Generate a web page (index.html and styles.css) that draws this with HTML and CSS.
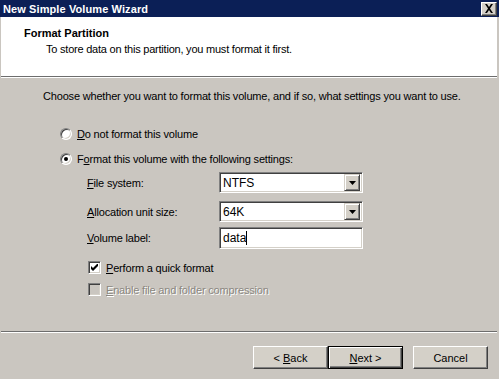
FILE: index.html
```html
<!DOCTYPE html>
<html>
<head>
<meta charset="utf-8">
<link rel="stylesheet" href="styles.css">
</head>
<body>
<div class="window">
  <div class="titlebar">
    <span class="title">New Simple Volume Wizard</span>
    <span class="close"><svg width="10" height="9" viewBox="0 0 10 9"><path d="M1 0h2l2 3 2-3h2L6 4.5 9 9H7L5 6 3 9H1l3-4.5z" fill="#000"/></svg></span>
  </div>
  <div class="header">
    <div class="h-title">Format Partition</div>
    <div class="h-sub">To store data on this partition, you must format it first.</div>
  </div>
  <div class="content">
    <p class="intro">Choose whether you want to format this volume, and if so, what settings you want to use.</p>
    <div class="radios">
      <div class="radio-row"><span class="radio"></span><span><u>D</u>o not format this volume</span></div>
      <div class="radio-row"><span class="radio on"></span><span>F<u>o</u>rmat this volume with the following settings:</span></div>
    </div>
    <div class="fields">
      <div class="field f1"><span class="lbl"><u>F</u>ile system:</span><div class="combo"><span class="val">NTFS</span><span class="drop"><svg width="7" height="4" viewBox="0 0 7 4"><path d="M0 0h7L3.5 4z" fill="#000"/></svg></span></div></div>
      <div class="field f2"><span class="lbl"><u>A</u>llocation unit size:</span><div class="combo"><span class="val">64K</span><span class="drop"><svg width="7" height="4" viewBox="0 0 7 4"><path d="M0 0h7L3.5 4z" fill="#000"/></svg></span></div></div>
      <div class="field f3"><span class="lbl"><u>V</u>olume label:</span><div class="textbox"><span class="val">data</span><span class="caret"></span></div></div>
    </div>
    <div class="checks">
      <div class="check-row"><span class="check"><svg width="7" height="7" viewBox="0 0 7 7"><path d="M0 2v3l2 2 5-5V-1L2 4z" fill="#000"/></svg></span><span><u>P</u>erform a quick format</span></div>
      <div class="check-row disabled"><span class="check dis"></span><span><u>E</u>nable file and folder compression</span></div>
    </div>
  </div>
  <div class="sep"></div>
  <div class="buttons">
    <button class="btn">&lt; <u>B</u>ack</button>
    <button class="btn default"><u>N</u>ext &gt;</button>
    <button class="btn cancel">Cancel</button>
  </div>
</div>
</body>
</html>
```

FILE: styles.css
```css
* { box-sizing: border-box; }
html, body { margin: 0; padding: 0; }
body {
  width: 499px;
  height: 379px;
  overflow: hidden;
  background: #cac6c0;
  font-family: "Liberation Sans", Arial, sans-serif;
  font-size: 11px;
  letter-spacing: -0.18px;
  color: #000;
}
u { text-decoration: underline; text-underline-offset: 1px; }
.window {
  width: 499px;
  height: 379px;
  display: flex;
  flex-direction: column;
  background: #cac6c0;
}
.titlebar {
  height: 17px;
  background: #0b1f56;
  display: flex;
  align-items: center;
  justify-content: space-between;
  padding: 0 2px 0 3px;
}
.title {
  color: #fff;
  font-weight: bold;
  font-size: 11px;
  letter-spacing: 0.1px;
}
.close {
  width: 16px;
  height: 14px;
  background: #d4d0c8;
  border-top: 1px solid #fff;
  border-left: 1px solid #fff;
  border-right: 1px solid #404040;
  border-bottom: 1px solid #404040;
  box-shadow: inset -1px -1px #808080;
  display: flex;
  align-items: center;
  justify-content: center;
  padding-bottom: 1px;
}
.header {
  height: 60px;
  background: #fff;
  margin: 0 2px 0 1px;
  padding: 10px 0 0 23px;
  border-bottom: 1px solid #6d6d6d;
}
.h-title {
  font-weight: bold;
  font-size: 11px;
  line-height: 13px;
  letter-spacing: 0;
}
.h-sub {
  margin-top: 3px;
  padding-left: 22px;
  line-height: 13px;
  letter-spacing: -0.22px;
}
.content {
  border-top: 1px solid #fff;
  margin: 0 2px 0 1px;
  padding: 12px 0 0 42px;
  height: 254px;
}
.intro {
  margin: 0;
  line-height: 13px;
}
.radios {
  margin-top: 24px;
  padding-left: 17px;
  display: flex;
  flex-direction: column;
  gap: 12px;
}
.radio-row {
  display: flex;
  align-items: center;
  gap: 5px;
  height: 13px;
}
.radio {
  width: 12px;
  height: 12px;
  border-radius: 50%;
  background: #fff;
  border: 1px solid;
  border-color: #808080 #fff #fff #808080;
  box-shadow: inset 1px 1px #404040, inset -1px -1px #d4d0c8;
  position: relative;
}
.radio.on::after {
  content: "";
  position: absolute;
  width: 4px;
  height: 4px;
  border-radius: 50%;
  background: #000;
  left: 3px;
  top: 3px;
}
.fields {
  margin-top: 7px;
  padding-left: 44px;
  display: flex;
  flex-direction: column;
}
.field {
  display: flex;
  align-items: center;
}
.f2 { margin-top: 8px; }
.f3 { margin-top: 5px; }
.lbl {
  width: 132px;
}
.combo, .textbox {
  width: 144px;
  height: 21px;
  background: #fff;
  border: 1px solid;
  border-color: #808080 #fff #fff #808080;
  box-shadow: inset 1px 1px #404040, inset -1px -1px #d4d0c8;
  display: flex;
  align-items: center;
  padding: 2px;
}
.textbox { height: 22px; }
.val {
  flex: 1;
  padding-left: 1px;
  font-size: 12px;
  letter-spacing: 0;
}
.textbox .val { flex: none; }
.caret {
  width: 1px;
  height: 14px;
  background: #000;
}
.drop {
  width: 16px;
  height: 17px;
  background: #d4d0c8;
  border-top: 1px solid #d4d0c8;
  border-left: 1px solid #d4d0c8;
  border-right: 1px solid #404040;
  border-bottom: 1px solid #404040;
  box-shadow: inset 1px 1px #fff, inset -1px -1px #808080;
  display: flex;
  align-items: center;
  justify-content: center;
}
.checks {
  margin-top: 12px;
  padding-left: 45px;
  display: flex;
  flex-direction: column;
  gap: 9px;
}
.check-row {
  display: flex;
  align-items: center;
  gap: 5px;
  height: 13px;
}
.check {
  width: 13px;
  height: 13px;
  background: #fff;
  border: 1px solid;
  border-color: #808080 #fff #fff #808080;
  box-shadow: inset 1px 1px #404040, inset -1px -1px #d4d0c8;
  display: flex;
  align-items: center;
  justify-content: center;
}
.check.dis { background: #cac6c0; }
.disabled { color: #8a8780; text-shadow: 1px 1px #fff; }
.sep {
  margin: 0 2px 0 1px;
  height: 2px;
  border-top: 1px solid #6d6d6d;
  border-bottom: 1px solid #fff;
}
.buttons {
  display: flex;
  justify-content: flex-end;
  padding: 13px 11px 0 0;
}
.btn {
  width: 75px;
  height: 23px;
  font-family: "Liberation Sans", Arial, sans-serif;
  font-size: 11px;
  letter-spacing: 0;
  color: #000;
  background: #d4d0c8;
  border-top: 1px solid #fff;
  border-left: 1px solid #fff;
  border-right: 1px solid #404040;
  border-bottom: 1px solid #404040;
  box-shadow: inset -1px -1px #808080;
  padding: 0;
}
.btn.default {
  border: 1px solid #000;
  box-shadow: inset 1px 1px #fff, inset -1px -1px #404040, inset -2px -2px #808080;
}
.btn.cancel { margin-left: 10px; }
```
